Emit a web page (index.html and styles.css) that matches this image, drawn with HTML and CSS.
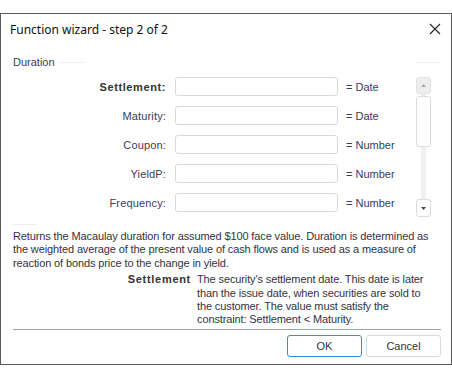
FILE: index.html
```html
<!DOCTYPE html>
<html>
<head>
    <title>Function wizard</title>
    <meta name="viewport" content="width=device-width, initial-scale=1.0">
    <link rel="stylesheet" href="styles.css">
</head>
<body>
    <div class="dialog">
        <div class="titlebar">
            <span class="title">Function wizard - step 2 of 2</span>
            <svg class="close" width="12" height="12" viewBox="0 0 12 12">
                <path d="M1 1 L11 11 M11 1 L1 11" stroke="#222" stroke-width="1.1" fill="none"/>
            </svg>
        </div>

        <div class="group">
            <div class="legend">
                <span>Duration</span>
                <i class="line line-left"></i>
                <i class="line line-right"></i>
            </div>

            <div class="params">
                <div class="rows">
                    <div class="row">
                        <label class="req">Settlement:</label>
                        <div class="input"></div>
                        <span class="type">= Date</span>
                    </div>
                    <div class="row">
                        <label>Maturity:</label>
                        <div class="input"></div>
                        <span class="type">= Date</span>
                    </div>
                    <div class="row">
                        <label>Coupon:</label>
                        <div class="input"></div>
                        <span class="type">= Number</span>
                    </div>
                    <div class="row">
                        <label>YieldP:</label>
                        <div class="input"></div>
                        <span class="type">= Number</span>
                    </div>
                    <div class="row">
                        <label>Frequency:</label>
                        <div class="input"></div>
                        <span class="type">= Number</span>
                    </div>
                </div>

                <div class="scrollbar">
                    <div class="sb-btn sb-up">
                        <svg width="5" height="3" viewBox="0 0 5 3"><path d="M0 3 L2.5 0 L5 3 Z" fill="#aaa"/></svg>
                    </div>
                    <div class="sb-track">
                        <div class="sb-thumb"></div>
                    </div>
                    <div class="sb-btn sb-down">
                        <svg width="5" height="3" viewBox="0 0 5 3"><path d="M0 0 L2.5 3 L5 0 Z" fill="#444"/></svg>
                    </div>
                </div>
            </div>
            <i class="line line-bottom"></i>
        </div>

        <p class="desc">Returns the Macaulay duration for assumed $100 face value. Duration is determined as<br>the weighted average of the present value of cash flows and is used as a measure of<br>reaction of bonds price to the change in yield.</p>

        <div class="arg">
            <span class="arg-name">Settlement</span>
            <span class="arg-text">The security's settlement date. This date is later<br>than the issue date, when securities are sold to<br>the customer. The value must satisfy the<br>constraint: Settlement &lt; Maturity.</span>
        </div>

        <div class="footer">
            <button class="btn btn-ok">OK</button>
            <button class="btn">Cancel</button>
        </div>
    </div>
</body>
</html>
```

FILE: styles.css
```css
body {
    margin: 0;
    background: #fff;
    font-family: "Liberation Sans", Arial, sans-serif;
    font-size: 11px;
}

.dialog {
    margin-top: 13px;
    height: 350px;
    border: 1px solid #5a5a5a;
    background: #fff;
    display: flex;
    flex-direction: column;
}

.titlebar {
    height: 30px;
    flex-shrink: 0;
    display: flex;
    align-items: center;
    justify-content: space-between;
    padding: 0 9px 2px 9px;
}

.title {
    font-family: "Noto Sans", sans-serif;
    font-size: 12px;
    color: #111;
}

.close {
    margin-right: 1px;
}

.group {
    position: relative;
    margin: 6px 10px 0 11px;
}

.legend {
    position: relative;
    height: 20px;
    display: flex;
    align-items: center;
    color: #3b3b58;
}

.legend span {
    padding-left: 1px;
}

.line {
    position: absolute;
    height: 1px;
    background: #ececec;
}

.line-left {
    left: 47px;
    width: 25px;
    top: 10px;
}

.line-right {
    right: 0;
    width: 24px;
    top: 10px;
}

.line-bottom {
    left: 1px;
    width: 24px;
    bottom: -8px;
}

.params {
    display: flex;
    padding-top: 5px;
}

.rows {
    display: flex;
    flex-direction: column;
    gap: 10px;
}

.row {
    display: flex;
    align-items: center;
    height: 19px;
}

.row label {
    width: 154px;
    text-align: right;
    color: #3b3b58;
    margin-right: 9px;
    letter-spacing: 0.15px;
}

.row label.req {
    font-weight: bold;
    color: #333;
    letter-spacing: 0.6px;
}

.input {
    width: 161px;
    height: 17px;
    border: 1px solid #d9d9d9;
    border-radius: 3px;
    margin-right: 8px;
}

.type {
    color: #3b3b58;
}

.scrollbar {
    margin-left: auto;
    margin-right: 10px;
    width: 15px;
    height: 140px;
    display: flex;
    flex-direction: column;
}

.sb-btn {
    border: 1px solid #dcdcdc;
    border-radius: 3px;
    box-sizing: border-box;
    display: flex;
    align-items: center;
    justify-content: center;
}

.sb-up {
    height: 17px;
    background: #eeeeee;
    border-color: #e2e2e2;
}

.sb-down {
    height: 18px;
    background: #fff;
}

.sb-track {
    flex: 1;
    padding-top: 2px;
    background: linear-gradient(to right, transparent 5px, #f0f0f0 5px, #f0f0f0 10px, transparent 10px);
}

.sb-thumb {
    height: 51px;
    border: 1px solid #dcdcdc;
    border-radius: 3px;
    background: #fff;
    box-sizing: border-box;
}

.desc {
    margin: 13px 10px 0 12px;
    line-height: 13.4px;
    letter-spacing: -0.12px;
    color: #333340;
    white-space: nowrap;
}

.arg {
    display: flex;
    margin-top: 3px;
    line-height: 13.4px;
    color: #333340;
}

.arg-name {
    width: 190px;
    text-align: right;
    font-weight: bold;
    color: #333;
    letter-spacing: 0.7px;
    flex-shrink: 0;
}

.arg-text {
    margin-left: 6px;
    letter-spacing: -0.12px;
    white-space: nowrap;
}

.footer {
    margin: auto 10px 7px 12px;
    border-top: 1px solid #a0a0a0;
    padding-top: 5px;
    display: flex;
    justify-content: flex-end;
    gap: 4px;
}

.btn {
    width: 75px;
    height: 22px;
    border: 1px solid #dadada;
    border-radius: 3px;
    background: #fff;
    font-family: "Liberation Sans", Arial, sans-serif;
    font-size: 11px;
    color: #333;
    padding: 0;
}

.btn-ok {
    border-color: #3d8cc7;
}
```
